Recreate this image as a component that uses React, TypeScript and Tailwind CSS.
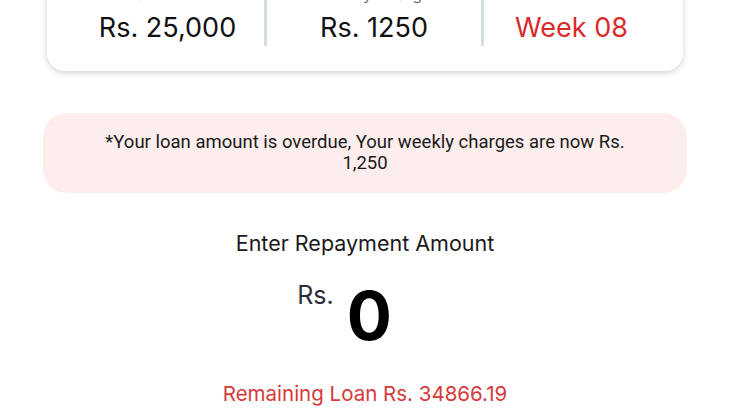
export default function App() {
  return (
    <div className="w-full overflow-hidden bg-white" style={{ height: 412 }}>
      <div className="mx-auto w-[636px] -mt-[33px] rounded-[18px] bg-white pt-[16px] pb-[25px] px-6 shadow-[0_2px_6px_rgba(0,0,0,0.18)] font-['Inter',sans-serif]">
        <div className="flex">
          <div className="flex w-[193px] flex-col items-center pb-[2px]">
            <span className="text-[16px] leading-[22px] text-gray-500">Loan Amount</span>
            <span className="mt-[7px] text-[27px] leading-[32px] text-[#111]">Rs. 25,000</span>
          </div>
          <div className="flex w-[217px] flex-col items-center border-l-[3px] border-[#d5dfdf] pb-[1px]">
            <span className="text-[16px] leading-[22px] text-gray-500">Weekly Charge</span>
            <span className="mt-[7px] text-[27px] leading-[32px] text-[#111]">Rs. 1250</span>
          </div>
          <div className="flex flex-1 flex-col items-center border-l-[3px] border-[#d5dfdf] pb-[1px]">
            <span className="text-[16px] leading-[22px] text-gray-500">Due Week</span>
            <span className="mt-[7px] text-[27px] leading-[32px] text-[#d92b2b]">Week 08</span>
          </div>
        </div>
      </div>

      <div className="mx-auto mt-[42px] w-[644px] rounded-[24px] bg-[#fdeeed] px-[50px] py-[19px] text-center font-['Roboto',sans-serif] text-[18.5px] leading-[21px] text-[#1a1a1a]">
        *Your loan amount is overdue, Your weekly charges are now Rs. 1,250
      </div>

      <div className="mt-[35px] flex flex-col items-center font-['Inter',sans-serif]">
        <span className="text-[21.5px] leading-[30px] text-[#1a1a1a]">Enter Repayment Amount</span>
        <div className="mt-[18px] flex items-start pr-[41px]">
          <span className="mt-[4px] text-[25px] leading-[30px] text-[#2d2d3a]">Rs.</span>
          <span className="ml-[13px] mt-[5px] text-[67px] font-bold leading-[70px] text-black">0</span>
        </div>
        <span className="mt-[29px] text-[20.5px] leading-[28px] text-[#d63a3a]">Remaining Loan Rs. 34866.19</span>
      </div>
    </div>
  );
}
